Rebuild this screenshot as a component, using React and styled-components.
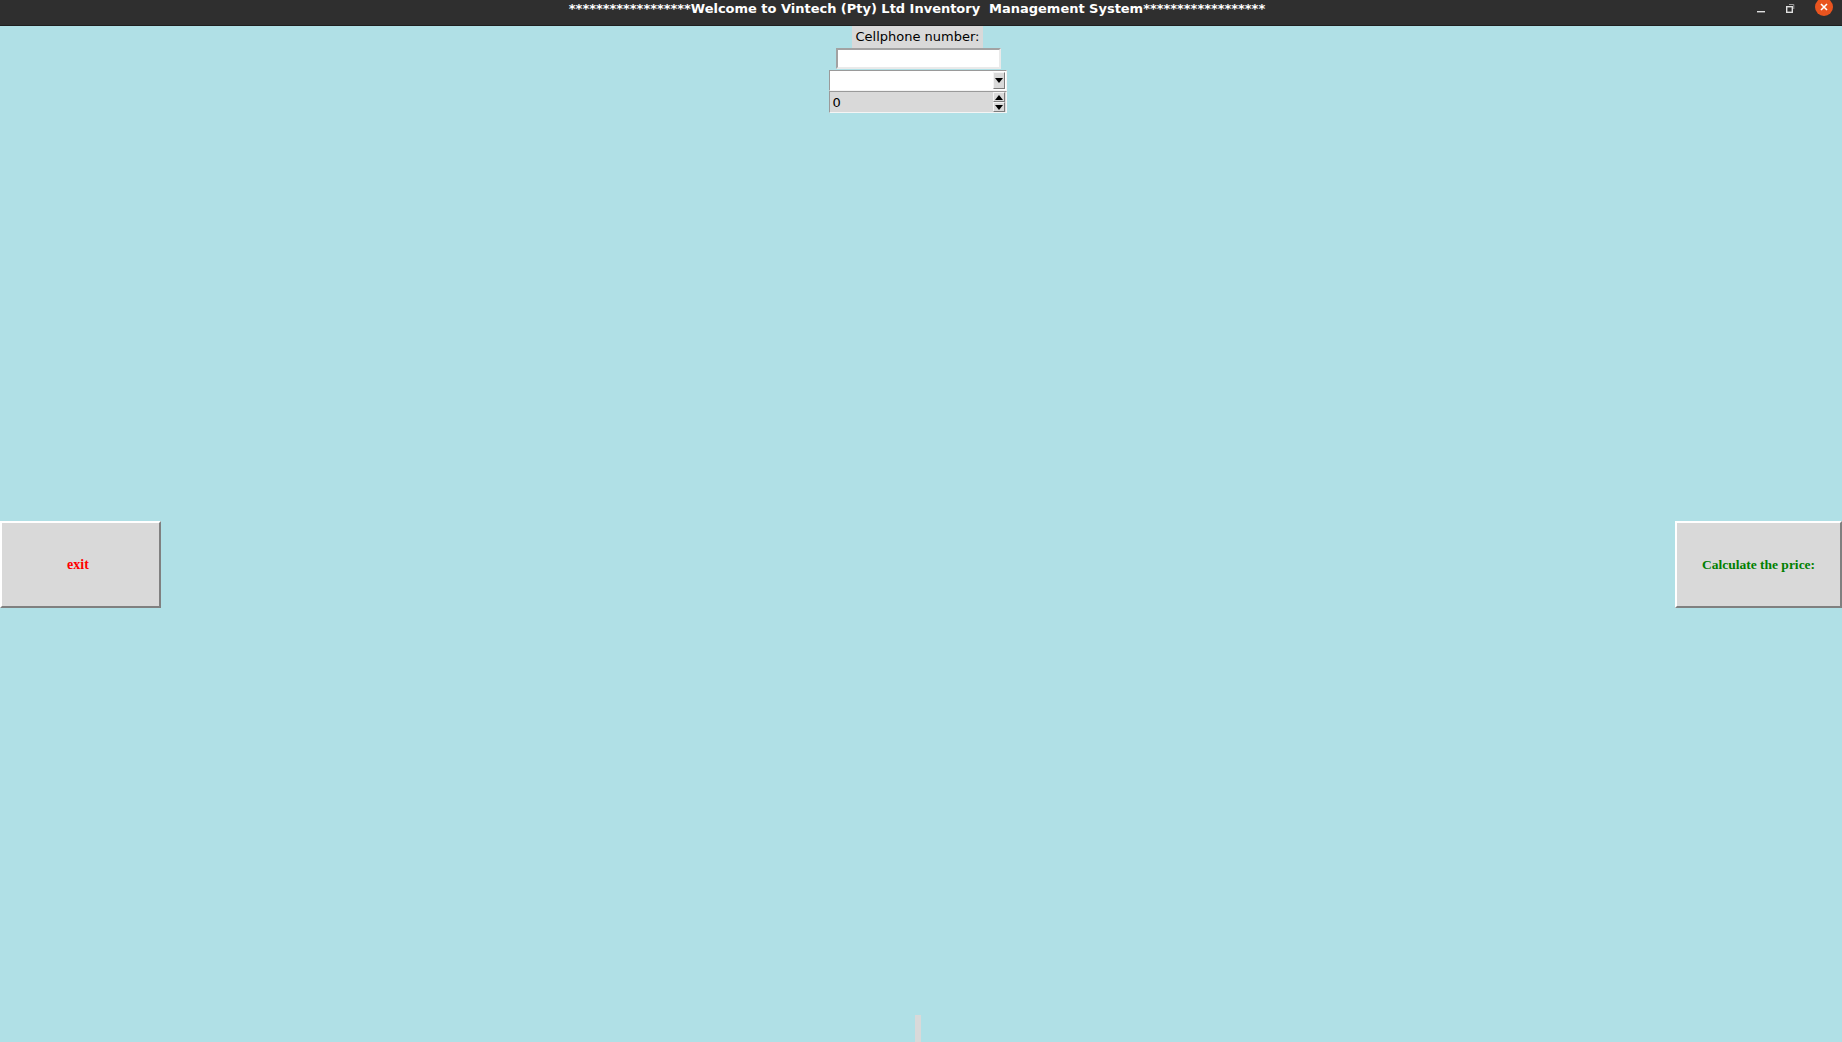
import styled, { createGlobalStyle } from "styled-components";

const GlobalStyle = createGlobalStyle`
    html, body {
        margin: 0;
        padding: 0;
        height: 100%;
        overflow: hidden;
        background: #b0e0e6;
    }
    #root {
        height: 100%;
    }
`;

const Window = styled.div`
    display: flex;
    flex-direction: column;
    width: 1842px;
    height: 1042px;
    background: #b0e0e6;
`;

const TitleBar = styled.div`
    position: relative;
    display: flex;
    align-items: center;
    justify-content: center;
    height: 25px;
    border-bottom: 1px solid #1f1f1f;
    background: #2f2f2f;
    flex-shrink: 0;
`;

const Title = styled.span`
    color: #ffffff;
    font-family: "DejaVu Sans", sans-serif;
    font-weight: bold;
    font-size: 13px;
    letter-spacing: -0.02px;
    white-space: pre;
    margin-top: -8px;
    margin-left: -8px;
`;

const Controls = styled.div`
    position: absolute;
    right: 9px;
    top: 0;
    display: flex;
    align-items: center;
    gap: 20px;
    height: 16px;
`;

const CloseDot = styled.div`
    width: 18px;
    height: 18px;
    border-radius: 50%;
    background: #e9541f;
    display: flex;
    align-items: center;
    justify-content: center;
    margin-top: -2px;
`;

const Body = styled.div`
    flex: 1;
    display: flex;
    flex-direction: column;
`;

const Form = styled.div`
    display: flex;
    flex-direction: column;
    align-items: center;
    margin-left: -7px;
`;

const Label = styled.div`
    background: #d9d9d9;
    padding: 0 3px;
    height: 22px;
    line-height: 22px;
    font-family: "DejaVu Sans", sans-serif;
    font-size: 13px;
    color: #000;
`;

const Entry = styled.div`
    box-sizing: border-box;
    width: 165px;
    height: 21px;
    margin-left: 2px;
    background: #ffffff;
    border: 2px solid;
    border-color: #a2a2a2 #eaeaea #eaeaea #a2a2a2;
`;

const Field = styled.div`
    box-sizing: border-box;
    display: flex;
    align-items: center;
    justify-content: space-between;
    width: 178px;
    height: ${({ $h }) => $h}px;
    margin-top: ${({ $mt }) => $mt}px;
    padding: 0 1px 0 3px;
    background: ${({ $bg }) => $bg};
    border: 1px solid;
    border-color: #9a9a9a #f4f4f4 #f4f4f4 #9a9a9a;
    font-family: "DejaVu Sans", sans-serif;
    font-size: 13px;
    color: #000;
`;

const ArrowButton = styled.div`
    box-sizing: border-box;
    width: 12px;
    height: ${({ $h }) => $h}px;
    background: #d9d9d9;
    border: 1px solid;
    border-color: #f4f4f4 #7c7c7c #7c7c7c #f4f4f4;
    display: flex;
    align-items: center;
    justify-content: center;
`;

const SpinButtons = styled.div`
    display: flex;
    flex-direction: column;
`;

const ButtonRow = styled.div`
    display: flex;
    justify-content: space-between;
    margin-top: 408px;
`;

const TkButton = styled.button`
    box-sizing: border-box;
    width: ${({ $w }) => $w}px;
    height: 87px;
    background: #d9d9d9;
    border: 2px solid;
    border-color: #ffffff #808080 #808080 #ffffff;
    font-family: "Liberation Serif", serif;
    font-weight: bold;
    font-size: ${({ $size }) => $size}px;
    color: ${({ $color }) => $color};
    padding: 0 ${({ $pr }) => $pr || 0}px 0 0;
    cursor: pointer;
`;

const Spacer = styled.div`
    flex: 1;
`;

const Sash = styled.div`
    align-self: center;
    width: 6px;
    height: 27px;
    margin-left: -6px;
    background: #d9d9d9;
`;

const Triangle = ({ up }) => (
    <svg width="8" height="5" viewBox="0 0 8 5">
        <polygon points={up ? "0,5 8,5 4,0" : "0,0 8,0 4,5"} fill="#000" />
    </svg>
);

const App = () => {
    return (
        <>
            <GlobalStyle />
            <Window>
                <TitleBar>
                    <Title>
                        {"******************Welcome to Vintech (Pty) Ltd Inventory  Management System******************"}
                    </Title>
                    <Controls>
                        <svg width="9" height="10" viewBox="0 0 9 10">
                            <rect x="0" y="8" width="8" height="1.4" fill="#e0e0e0" />
                        </svg>
                        <svg width="9" height="10" viewBox="0 0 9 10">
                            <rect x="0.7" y="3.7" width="5.6" height="5.6" fill="none" stroke="#e0e0e0" strokeWidth="1.4" />
                            <polyline points="3,1.5 7.8,1.5 7.8,6" fill="none" stroke="#9a9a9a" strokeWidth="1" />
                        </svg>
                        <CloseDot>
                            <svg width="8" height="8" viewBox="0 0 8 8">
                                <path d="M1 1 L7 7 M7 1 L1 7" stroke="#fff" strokeWidth="1.6" />
                            </svg>
                        </CloseDot>
                    </Controls>
                </TitleBar>
                <Body>
                    <Form>
                        <Label>Cellphone number:</Label>
                        <Entry />
                        <Field $h={21} $mt={1} $bg="#ffffff">
                            <span />
                            <ArrowButton $h={17}>
                                <Triangle />
                            </ArrowButton>
                        </Field>
                        <Field $h={22} $mt={0} $bg="#d9d9d9">
                            <span>0</span>
                            <SpinButtons>
                                <ArrowButton $h={10}>
                                    <Triangle up />
                                </ArrowButton>
                                <ArrowButton $h={10}>
                                    <Triangle />
                                </ArrowButton>
                            </SpinButtons>
                        </Field>
                    </Form>
                    <ButtonRow>
                        <TkButton $w={161} $pr={5} $size={14} $color="#ff0000">exit</TkButton>
                        <TkButton $w={167} $size={13.5} $color="#008000">Calculate the price:</TkButton>
                    </ButtonRow>
                    <Spacer />
                    <Sash />
                </Body>
            </Window>
        </>
    );
};

export default App;
